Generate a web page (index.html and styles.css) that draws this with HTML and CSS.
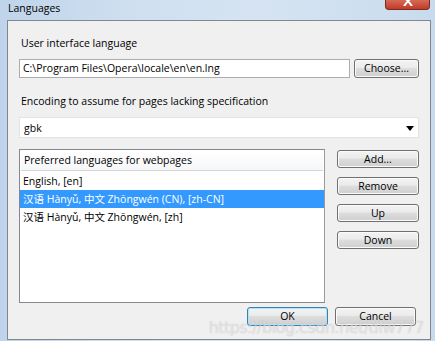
FILE: index.html
```html
<!DOCTYPE html>
<html>
<head>
<meta charset="utf-8">
<link rel="stylesheet" href="styles.css">
</head>
<body>
<div class="window">
  <div class="titlebar">
    <span class="title">Languages</span>
    <span class="close"><svg width="12" height="6" viewBox="0 0 12 6"><path d="M2 -3 L6 1 L10 -3 M2 6 L6 1 L10 6" stroke="#fff" stroke-width="2" fill="none"/></svg></span>
  </div>
  <div class="frame">
    <div class="panel">
      <div class="label first">User interface language</div>
      <div class="row">
        <div class="input">C:\Program Files\Opera\locale\en\en.lng</div>
        <button class="btn choose">Choose...</button>
      </div>
      <div class="label">Encoding to assume for pages lacking specification</div>
      <div class="select"><span>gbk</span><span class="arrow"></span></div>
      <div class="listrow">
        <div class="list">
          <div class="listhead">Preferred languages for webpages</div>
          <div class="item">English, [en]</div>
          <div class="item sel">汉语 Hànyǔ, 中文 Zhōngwén (CN), [zh-CN]</div>
          <div class="item">汉语 Hànyǔ, 中文 Zhōngwén, [zh]</div>
        </div>
        <div class="side">
          <button class="btn side-btn">Add...</button>
          <button class="btn side-btn">Remove</button>
          <button class="btn side-btn">Up</button>
          <button class="btn side-btn">Down</button>
        </div>
      </div>
      <div class="bottom">
        <button class="btn big ok">OK</button>
        <button class="btn big">Cancel</button>
      </div>
      <div class="watermark">https://blog.csdn.net/dlw777</div>
    </div>
  </div>
</div>
</body>
</html>
```
FILE: styles.css
```css
* { box-sizing: border-box; }
html, body { margin: 0; padding: 0; }
body {
  width: 435px;
  height: 341px;
  overflow: hidden;
  font-family: "Open Sans", "Noto Sans CJK SC", sans-serif;
  font-size: 10.5px;
  color: #000;
}
.window {
  width: 435px;
  height: 341px;
  display: flex;
  flex-direction: column;
  background: linear-gradient(90deg, #bfd4ea 0%, #cfdff0 30%, #d6e4f2 60%, #c8dbee 100%);
}
.titlebar {
  height: 20px;
  display: flex;
  justify-content: space-between;
  align-items: flex-start;
  padding: 0 5px 0 8px;
}
.title {
  line-height: 16px;
}
.close {
  width: 45px;
  height: 10px;
  background: linear-gradient(#d46b58, #c23b25);
  border: 1px solid #7a2a1e;
  border-top: none;
  border-radius: 0 0 4px 4px;
  display: flex;
  justify-content: center;
  align-items: flex-start;
}
.frame {
  flex: 1;
  padding: 0 4px 1px 7px;
  display: flex;
}
.panel {
  position: relative;
  flex: 1;
  background: #f0f0f0;
  border: 1px solid #7f8891;
  padding: 0 11px 0 11px;
  display: flex;
  flex-direction: column;
}
.label {
  height: 16px;
  line-height: 16px;
  padding-left: 2px;
  margin-top: 15px;
  margin-bottom: 8px;
}
.label.first { margin-top: 14px; }
.row {
  display: flex;
  gap: 4px;
  height: 19px;
}
.input {
  width: 331px;
  height: 19px;
  background: #fff;
  border: 1px solid #abadb3;
  line-height: 17px;
  padding-left: 3px;
  white-space: nowrap;
  overflow: hidden;
}
.btn {
  font-family: inherit;
  font-size: 10.5px;
  color: #000;
  background: linear-gradient(#f3f3f3 0%, #ebebeb 45%, #dddddd 50%, #cfcfcf 100%);
  border: 1px solid #707070;
  border-radius: 3px;
  padding: 0;
  line-height: 15px;
  box-shadow: inset 0 0 0 1px #fbfbfb;
}
.choose { width: 65px; height: 19px; }
.select {
  height: 21px;
  width: 400px;
  background: #fff;
  border: 1px solid #e3e3e3;
  display: flex;
  justify-content: space-between;
  align-items: center;
  padding: 0 4px 0 4px;
}
.arrow {
  width: 0;
  height: 0;
  border-left: 4px solid transparent;
  border-right: 4px solid transparent;
  border-top: 5px solid #000;
  margin-top: 1px;
}
.listrow {
  display: flex;
  margin-top: 11px;
  gap: 12px;
}
.list {
  width: 306px;
  height: 154px;
  background: #fff;
  border: 1px solid #828790;
  border-right-color: #9a9a9a;
}
.listhead {
  height: 20px;
  margin: 1px;
  line-height: 18px;
  padding-left: 3px;
  border-bottom: 1px solid #d5d5d5;
  background: linear-gradient(#fff, #f6f7f9);
}
.item {
  height: 18px;
  line-height: 18px;
  padding-left: 3px;
  white-space: nowrap;
}
.item.sel {
  background: #3399ff;
  color: #fff;
}
.side {
  display: flex;
  flex-direction: column;
  gap: 9px;
  padding-top: 1px;
}
.side-btn { width: 82px; height: 18px; }
.bottom {
  display: flex;
  justify-content: flex-end;
  gap: 7px;
  margin-top: 4px;
  padding-right: 3px;
}
.big { width: 81px; height: 19px; }
.ok {
  border-color: #3c7fb1;
  box-shadow: inset 0 0 0 1px #aee3f9;
}
.watermark {
  position: absolute;
  right: 6px;
  bottom: 2px;
  font-family: "DejaVu Sans", sans-serif;
  font-size: 16px;
  letter-spacing: -0.5px;
  color: rgba(255, 255, 255, 0.45);
  text-shadow: 0 0 1px rgba(150,150,150,0.5);
  pointer-events: none;
}
```
